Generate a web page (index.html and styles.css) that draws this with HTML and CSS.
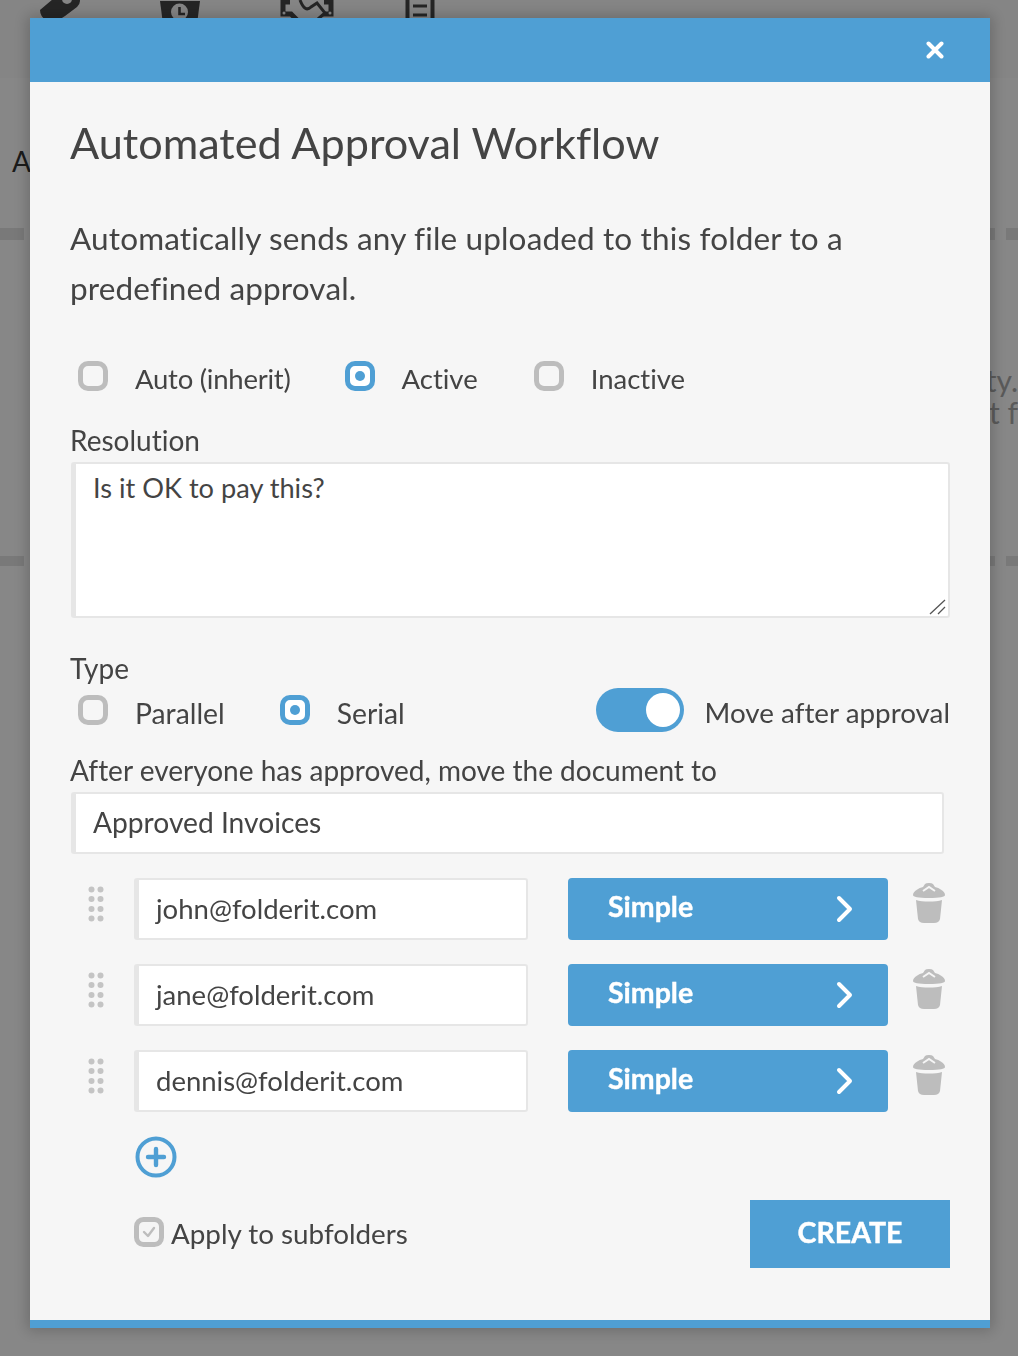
FILE: index.html
```html
<!DOCTYPE html>
<html lang="en">
<head>
<meta charset="utf-8">
<title>Automated Approval Workflow</title>
<link rel="stylesheet" href="styles.css">
</head>
<body>
<div class="backdrop">
  <div class="toolbar">
    <svg class="tool tool-tag" width="42" height="28" viewBox="0 0 42 28"><path d="M1 14 L14 3 Q16 1 19 1 L37 1 Q41 1 41 5 Q41 8 38 11 L26 20 Q22 23 17 25 L8 25 Q1 21 1 14Z" fill="#464646"/><circle cx="28" cy="3" r="5" fill="#fbfbfb"/></svg>
    <svg class="tool tool-clock" width="40" height="28" viewBox="0 0 40 28"><path d="M0 5H40L37 28H3Z" fill="#464646"/><circle cx="19.500" cy="16" r="8.500" fill="#fbfbfb"/><path d="M19.500 11V18H25" stroke="#464646" stroke-width="2.600" fill="none"/></svg>
    <svg class="tool tool-hands" width="54" height="28" viewBox="0 0 54 28"><path d="M3 0V18H11L19 26M51 0V18H43M4 6H10M50 6H44" stroke="#464646" stroke-width="5" fill="none"/><circle cx="4" cy="17" r="1.500" fill="#fbfbfb"/><circle cx="50" cy="17" r="1.500" fill="#fbfbfb"/><path d="M20 4Q25 17 31 11L37 7L45 17L38 23" stroke="#464646" stroke-width="3" fill="none"/></svg>
    <svg class="tool tool-list" width="30" height="28" viewBox="0 0 30 28"><path d="M2.500 0V28M27.500 0V28" stroke="#464646" stroke-width="4"/><path d="M8 1H22M8 10H22M8 19H22" stroke="#464646" stroke-width="3"/></svg>
  </div>
  <div class="bg-heading">A</div>
  <div class="bg-rule"><span class="bg-dash-left"></span><span class="bg-dash-near"></span><span class="bg-dash-right"></span></div>
  <p class="bg-text">ty.<br>t f</p>
  <div class="bg-rule bg-rule-second"><span class="bg-dash-left"></span><span class="bg-dash-near"></span><span class="bg-dash-right"></span></div>
</div>

<div class="overlay">
  <div class="modal">
    <div class="modal-top">
      <svg class="close" width="18" height="18" viewBox="0 0 18 18"><path d="M2.500 2.500L15.500 15.500M15.500 2.500L2.500 15.500" stroke="#fff" stroke-width="4" stroke-linecap="round"/></svg>
    </div>
    <div class="modal-body">
      <h1 class="title">Automated Approval Workflow</h1>
      <p class="intro">Automatically sends any file uploaded to this folder to a predefined approval.</p>

      <div class="radio-row">
        <label class="radio radio-auto"><span class="radio-box"></span><span class="radio-text radio-text-auto">Auto (inherit)</span></label>
        <label class="radio radio-active"><span class="radio-box radio-on"></span><span class="radio-text">Active</span></label>
        <label class="radio"><span class="radio-box"></span><span class="radio-text">Inactive</span></label>
      </div>

      <div class="field-label label-resolution">Resolution</div>
      <div class="textarea">
        Is it OK to pay this?
        <svg class="grip-resize" width="18" height="16" viewBox="0 0 18 16"><path d="M1 15L16 1M9 15L16 8" stroke="#555" stroke-width="1.300"/></svg>
      </div>

      <div class="field-label label-type">Type</div>
      <div class="type-row">
        <label class="radio radio-parallel"><span class="radio-box"></span><span class="radio-text radio-text-type">Parallel</span></label>
        <label class="radio"><span class="radio-box radio-on"></span><span class="radio-text radio-text-type">Serial</span></label>
        <div class="move-toggle">
          <span class="toggle"><span class="knob"></span></span>
          <span class="toggle-text">Move after approval</span>
        </div>
      </div>

      <div class="field-label label-after">After everyone has approved, move the document to</div>
      <div class="input input-folder">Approved Invoices</div>

      <div class="approvers">
        <div class="approver">
          <svg class="drag" width="16" height="36" viewBox="0 0 16 36"><g fill="#c4c4c4"><circle cx="3.500" cy="3.500" r="3"/><circle cx="12.500" cy="3.500" r="3"/><circle cx="3.500" cy="13" r="3"/><circle cx="12.500" cy="13" r="3"/><circle cx="3.500" cy="23" r="3"/><circle cx="12.500" cy="23" r="3"/><circle cx="3.500" cy="32.500" r="3"/><circle cx="12.500" cy="32.500" r="3"/></g></svg>
          <div class="input input-email">john@folderit.com</div>
          <button class="simple"><span>Simple</span><svg width="18" height="28" viewBox="0 0 18 28"><path d="M3 3L14 14L3 25" stroke="#fff" stroke-width="4" fill="none" stroke-linecap="round" stroke-linejoin="round"/></svg></button>
          <svg class="trash" width="34" height="42" viewBox="0 0 34 42"><path d="M1 13C1 9 7 6 11 5L13 2Q14 1 17 1T21 2L23 5C27 6 33 9 33 13C33 15 28 16 17 16S1 15 1 13Z" fill="#bdbdbd"/><path d="M11 9L17 5L23 9" stroke="#f5f5f5" stroke-width="2" fill="none"/><path d="M4 18C10 20 24 20 30 18L28 37Q27 41 22 41H12Q7 41 6 37Z" fill="#bdbdbd"/></svg>
        </div>
        <div class="approver">
          <svg class="drag" width="16" height="36" viewBox="0 0 16 36"><g fill="#c4c4c4"><circle cx="3.500" cy="3.500" r="3"/><circle cx="12.500" cy="3.500" r="3"/><circle cx="3.500" cy="13" r="3"/><circle cx="12.500" cy="13" r="3"/><circle cx="3.500" cy="23" r="3"/><circle cx="12.500" cy="23" r="3"/><circle cx="3.500" cy="32.500" r="3"/><circle cx="12.500" cy="32.500" r="3"/></g></svg>
          <div class="input input-email">jane@folderit.com</div>
          <button class="simple"><span>Simple</span><svg width="18" height="28" viewBox="0 0 18 28"><path d="M3 3L14 14L3 25" stroke="#fff" stroke-width="4" fill="none" stroke-linecap="round" stroke-linejoin="round"/></svg></button>
          <svg class="trash" width="34" height="42" viewBox="0 0 34 42"><path d="M1 13C1 9 7 6 11 5L13 2Q14 1 17 1T21 2L23 5C27 6 33 9 33 13C33 15 28 16 17 16S1 15 1 13Z" fill="#bdbdbd"/><path d="M11 9L17 5L23 9" stroke="#f5f5f5" stroke-width="2" fill="none"/><path d="M4 18C10 20 24 20 30 18L28 37Q27 41 22 41H12Q7 41 6 37Z" fill="#bdbdbd"/></svg>
        </div>
        <div class="approver">
          <svg class="drag" width="16" height="36" viewBox="0 0 16 36"><g fill="#c4c4c4"><circle cx="3.500" cy="3.500" r="3"/><circle cx="12.500" cy="3.500" r="3"/><circle cx="3.500" cy="13" r="3"/><circle cx="12.500" cy="13" r="3"/><circle cx="3.500" cy="23" r="3"/><circle cx="12.500" cy="23" r="3"/><circle cx="3.500" cy="32.500" r="3"/><circle cx="12.500" cy="32.500" r="3"/></g></svg>
          <div class="input input-email">dennis@folderit.com</div>
          <button class="simple"><span>Simple</span><svg width="18" height="28" viewBox="0 0 18 28"><path d="M3 3L14 14L3 25" stroke="#fff" stroke-width="4" fill="none" stroke-linecap="round" stroke-linejoin="round"/></svg></button>
          <svg class="trash" width="34" height="42" viewBox="0 0 34 42"><path d="M1 13C1 9 7 6 11 5L13 2Q14 1 17 1T21 2L23 5C27 6 33 9 33 13C33 15 28 16 17 16S1 15 1 13Z" fill="#bdbdbd"/><path d="M11 9L17 5L23 9" stroke="#f5f5f5" stroke-width="2" fill="none"/><path d="M4 18C10 20 24 20 30 18L28 37Q27 41 22 41H12Q7 41 6 37Z" fill="#bdbdbd"/></svg>
        </div>
      </div>

      <svg class="add" width="42" height="42" viewBox="0 0 42 42"><circle cx="21" cy="21" r="18.500" fill="none" stroke="#4f9fd4" stroke-width="4"/><path d="M21 13V29M13 21H29" stroke="#4f9fd4" stroke-width="4.400" stroke-linecap="round"/></svg>

      <div class="footer-row">
        <label class="check">
          <svg width="30" height="30" viewBox="0 0 30 30"><rect x="2.500" y="2.500" width="25" height="25" rx="7" fill="#f5f5f5" stroke="#bdbdbd" stroke-width="5"/><path d="M10 15L14 19L20 11" stroke="#bdbdbd" stroke-width="2.400" fill="none" stroke-linecap="round" stroke-linejoin="round"/></svg>
          <span class="check-text">Apply to subfolders</span>
        </label>
        <button class="create">CREATE</button>
      </div>
    </div>
    <div class="modal-bottom"></div>
  </div>
</div>
</body>
</html>
```
FILE: styles.css
```css
* { box-sizing: border-box; }
html, body { margin: 0; padding: 0; }
body {
  width: 1018px;
  height: 1356px;
  overflow: hidden;
  background: #fff;
  font-family: "Lato", "Liberation Sans", sans-serif;
  font-variant-ligatures: none;
  color: #444;
}

/* page behind the dialog */
.backdrop { height: 1356px; overflow: hidden; }
.toolbar {
  height: 78px;
  background: #fbfbfb;
  display: flex;
  align-items: flex-start;
}
.tool { flex: none; }
.tool-tag { margin: -4px 0 0 39px; }
.tool-clock { margin: -4px 0 0 79px; }
.tool-hands { margin: -4px 0 0 80px; }
.tool-list { margin: -4px 0 0 71px; }
.bg-heading {
  margin: 65px 0 0 12px;
  font-size: 28px;
  line-height: 36px;
  color: #333;
  white-space: nowrap;
}
.bg-rule {
  display: flex;
  margin-top: 49px;
  height: 12px;
}
.bg-rule-second { margin-top: 128px; height: 10px; }
.bg-rule span { display: block; background: #e4e4e4; }
.bg-dash-left { width: 24px; }
.bg-dash-near { width: 5px; margin-left: 966px; }
.bg-dash-right { width: 12px; margin-left: 11px; }
.bg-text {
  margin: 124px 0 0;
  text-align: right;
  font-size: 30px;
  line-height: 32px;
  color: #aaa;
  white-space: nowrap;
}

/* dialog */
.overlay {
  position: fixed;
  inset: 0;
  background: rgba(0, 0, 0, .47);
  padding: 18px 28px 28px 30px;
}
.modal {
  width: 960px;
  height: 1310px;
  background: #f6f6f6;
  display: flex;
  flex-direction: column;
  box-shadow: 0 0 14px 3px rgba(0, 0, 0, .2);
}
.modal-top {
  flex: none;
  height: 64px;
  background: #4f9fd4;
  display: flex;
  align-items: center;
  justify-content: flex-end;
  padding-right: 46px;
}
.modal-body {
  flex: 1;
  padding: 0 40px 0 41px;
}
.modal-bottom { flex: none; height: 8px; background: #4f9fd4; }

.title {
  margin: 31px 0 0 -1px;
  font-size: 43.2px;
  line-height: 58px;
  font-weight: 400;
  color: #444;
}
.intro {
  margin: 42px 0 0 -1px;
  font-size: 31.5px;
  line-height: 50px;
  letter-spacing: .15px;
  color: #444;
}

.radio-row { display: flex; margin-top: 41px; height: 44px; align-items: center; }
.radio { display: flex; align-items: center; }
.radio-auto { margin-right: 47px; }
.radio-active { margin-right: 49px; }
.radio-parallel { margin-right: 48px; }
.radio-box {
  flex: none;
  width: 30px;
  height: 30px;
  margin: 0 27px 0 7px;
  border: 5px solid #bdbdbd;
  border-radius: 10px;
  background: #f6f6f6;
  position: relative;
}
.radio-on { border-color: #4f9fd4; background: #fff; }
.radio-on::after {
  content: "";
  position: absolute;
  left: 5px;
  top: 5px;
  width: 10px;
  height: 10px;
  border-radius: 50%;
  background: #4f9fd4;
}
.radio-text { font-size: 27.5px; line-height: 40px; padding-top: 6px; color: #444; }
.radio-text-auto { letter-spacing: -.25px; }
.radio-text-type { font-size: 28.3px; }

.field-label { font-size: 28px; line-height: 36px; color: #444; margin-left: -1px; }
.label-resolution { margin-top: 24px; height: 40px; }
.label-type { margin-top: 32px; height: 36px; }
.label-after { margin-top: 20px; height: 40px; }

.textarea {
  position: relative;
  height: 156px;
  background: #fff;
  border: 2px solid #e6e6e6;
  border-left-width: 5px;
  border-radius: 3px;
  padding: 4px 0 0 17px;
  font-size: 27.2px;
  line-height: 40px;
  color: #444;
}
.grip-resize { position: absolute; right: 1px; bottom: 1px; }

.type-row { display: flex; align-items: center; height: 44px; margin-top: 2px; }
.move-toggle { margin-left: auto; display: flex; align-items: center; }
.toggle {
  width: 88px;
  height: 44px;
  border-radius: 22px;
  background: #4f9fd4;
  display: flex;
  align-items: center;
  justify-content: flex-end;
  padding-right: 4px;
  margin-right: 21px;
}
.knob { width: 34px; height: 34px; border-radius: 50%; background: #fff; }
.toggle-text { font-size: 27.8px; line-height: 40px; padding-top: 6px; color: #444; }

.input {
  background: #fff;
  border: 2px solid #e6e6e6;
  border-left-width: 5px;
  border-radius: 3px;
  font-size: 28.2px;
  line-height: 56px;
  height: 62px;
  color: #444;
  white-space: nowrap;
}
.input-folder { width: 873px; padding-left: 17px; }
.input-email { width: 394px; padding-left: 17px; flex: none; font-size: 27.5px; line-height: 58px; }

.approvers { margin-top: 24px; display: flex; flex-direction: column; gap: 24px; }
.approver { display: flex; align-items: flex-start; height: 62px; }
.drag { flex: none; margin: 8px 30px 0 17px; }
.simple {
  flex: none;
  width: 320px;
  height: 62px;
  margin-left: 40px;
  border: 0;
  border-radius: 4px;
  background: #4f9fd4;
  color: #fff;
  font: 700 28.5px "Lato", "Liberation Sans", sans-serif;
  -webkit-text-stroke: .4px #fff;
  display: flex;
  align-items: center;
  justify-content: space-between;
  padding: 0 34px 6px 40px;
}
.simple svg { margin-top: 6px; }
.trash { flex: none; margin: 4px 0 0 24px; }

.add { display: block; margin: 24px 0 0 63.5px; }

.footer-row {
  display: flex;
  justify-content: space-between;
  align-items: flex-start;
  margin-top: 22px;
}
.check { display: flex; align-items: center; margin: 16px 0 0 63px; height: 36px; }
.check svg { flex: none; margin: -4px 7px 0 0; }
.check-text { font-size: 27.8px; line-height: 36px; color: #444; }
.create {
  width: 200px;
  height: 68px;
  border: 0;
  background: #4f9fd4;
  color: #fff;
  font: 700 28.5px "Lato", "Liberation Sans", sans-serif;
  -webkit-text-stroke: .4px #fff;
  padding: 0 0 4px;
}
```
